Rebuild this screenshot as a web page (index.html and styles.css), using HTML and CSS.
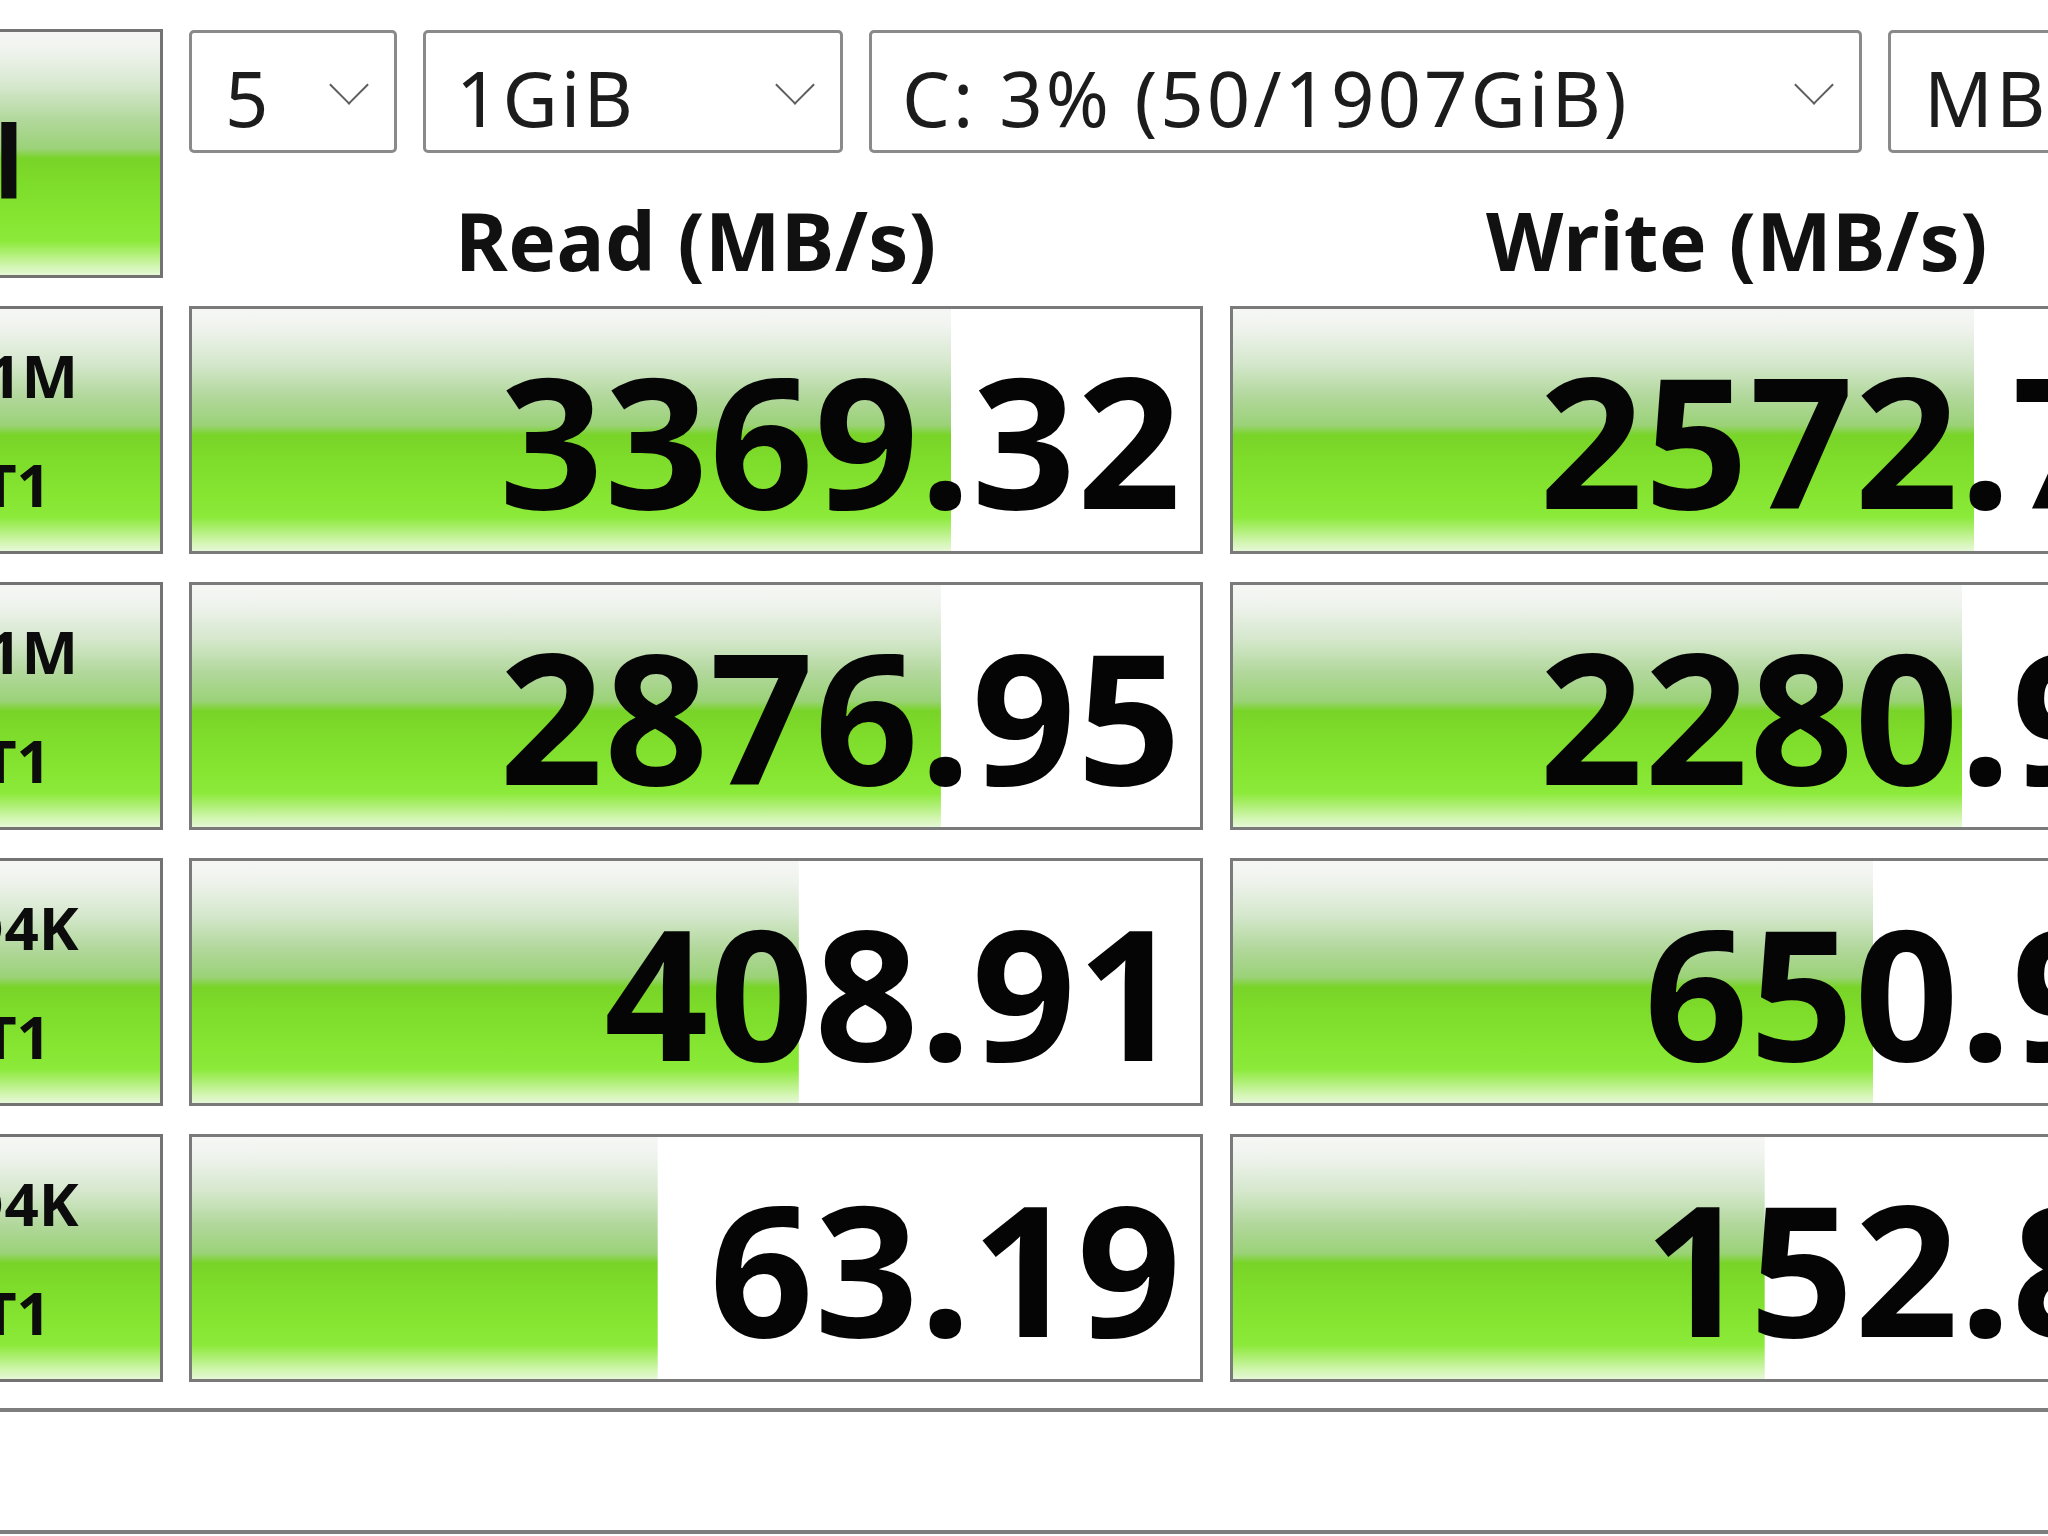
FILE: index.html
```html
<!DOCTYPE html>
<html lang="en">
<head>
    <meta charset="utf-8">
    <title>CrystalDiskMark</title>
    <link rel="stylesheet" href="styles.css">
</head>
<body>
    <div id="bench">
        <div class="btn-all">All</div>
        <div class="controls">
            <div class="selects">
                <div class="select sel-count">5<span class="chev"></span></div>
                <div class="select sel-size">1GiB<span class="chev"></span></div>
                <div class="select sel-drive">C: 3% (50/1907GiB)<span class="chev"></span></div>
                <div class="select sel-unit">MB/s<span class="chev"></span></div>
            </div>
            <div class="heads">
                <div class="head">Read (MB/s)</div>
                <div class="head">Write (MB/s)</div>
            </div>
        </div>

        <div class="test">SEQ1M<br>Q8T1</div>
        <div class="score" style="--pct: 75.3%">3369.32</div>
        <div class="score" style="--pct: 73.6%">2572.73</div>

        <div class="test">SEQ1M<br>Q1T1</div>
        <div class="score" style="--pct: 74.3%">2876.95</div>
        <div class="score" style="--pct: 72.4%">2280.94</div>

        <div class="test">RND4K<br>Q1T1</div>
        <div class="score" style="--pct: 60.2%">408.91</div>
        <div class="score" style="--pct: 63.6%">650.92</div>

        <div class="test">RND4K<br>Q1T1</div>
        <div class="score" style="--pct: 46.2%">63.19</div>
        <div class="score" style="--pct: 52.8%">152.86</div>

        <div class="comment"></div>
    </div>
</body>
</html>
```

FILE: styles.css
```css
html, body {
    margin: 0;
    background: #fff;
    overflow: hidden;
}
body {
    font-family: "Noto Sans", "Open Sans", sans-serif;
    color: #111;
}

/* the window is wider than the screen, scrolled a little to the right */
#bench {
    --glossy: linear-gradient(to bottom,
        #f6f7f5 0%, #eff3ed 8%, #d6e8ce 22%, #b2d89c 36%, #9bd278 48%,
        #78d428 52%, #7edc2a 62%, #86e632 78%, #8cea3a 86%,
        #b4f07e 92%, #d6f6b8 97%, #e6f8d6 100%);
    width: 2456px;
    margin-left: -212px;
    padding-top: 29px;
    display: grid;
    grid-template-columns: 375px 1014px 1014px;
    column-gap: 26px;
    row-gap: 28px;
}

.btn-all {
    height: 249px;
    box-sizing: border-box;
    border: 3px solid #737373;
    background: var(--glossy);
    display: flex;
    align-items: center;
    justify-content: center;
    padding: 12px 32px 0 0;
    font-weight: 700;
    font-size: 100px;
    color: #0c0c0c;
}

.controls {
    grid-column: 2 / span 2;
    display: flex;
    flex-direction: column;
}
.selects {
    display: flex;
    gap: 26px;
    height: 124px;
    margin-top: 1px;
}
.select {
    position: relative;
    box-sizing: border-box;
    height: 123px;
    border: 3px solid #8a8a8a;
    border-radius: 5px;
    padding: 12px 0 0 33px;
    display: flex;
    align-items: center;
    font-size: 76px;
    letter-spacing: 3px;
    color: #1c1c1c;
    white-space: nowrap;
    overflow: hidden;
}
.sel-count { width: 208px; }
.sel-size { width: 420px; padding-left: 30px; }
.sel-drive { width: 993px; padding-left: 30px; }
.sel-unit { flex: 1; }

/* thin down chevron at the right of each dropdown */
.chev {
    position: absolute;
    right: 31px;
    top: 52px;
    width: 28px;
    height: 28px;
    border-right: 2.5px solid #5e5e5e;
    border-bottom: 2.5px solid #5e5e5e;
    transform: translateY(-50%) rotate(45deg);
    transform-origin: center;
    box-sizing: border-box;
}
.sel-unit .chev { display: none; }

.heads {
    flex: 1;
    display: grid;
    grid-template-columns: 1014px 1014px;
    column-gap: 27px;
    align-items: end;
}
.head {
    text-align: center;
    font-weight: 700;
    font-size: 80px;
    letter-spacing: 0.5px;
    line-height: 1;
    color: #111;
    margin-bottom: -2px;
}

.test {
    height: 248px;
    box-sizing: border-box;
    border: 3px solid #737373;
    background: var(--glossy);
    display: flex;
    align-items: center;
    justify-content: center;
    text-align: center;
    font-weight: 700;
    font-size: 60px;
    line-height: 109px;
    color: #0c0c0c;
}

.score {
    height: 248px;
    box-sizing: border-box;
    border: 3px solid #7a7a7a;
    background: var(--glossy) no-repeat 0 0 / var(--pct) 100%, #fff;
    display: flex;
    align-items: center;
    justify-content: flex-end;
    padding: 16px 18px 0 0;
    font-weight: 700;
    font-size: 182px;
    letter-spacing: 1px;
    line-height: 1;
    color: #050505;
    white-space: nowrap;
    overflow: hidden;
}
.score:nth-child(3n+2) { margin-left: 1px; }

.comment {
    grid-column: 1 / -1;
    height: 126px;
    margin-top: -2px;
    box-sizing: border-box;
    border-top: 4px solid #7e7e7e;
    border-bottom: 4px solid #7e7e7e;
    background: #fff;
}
```
